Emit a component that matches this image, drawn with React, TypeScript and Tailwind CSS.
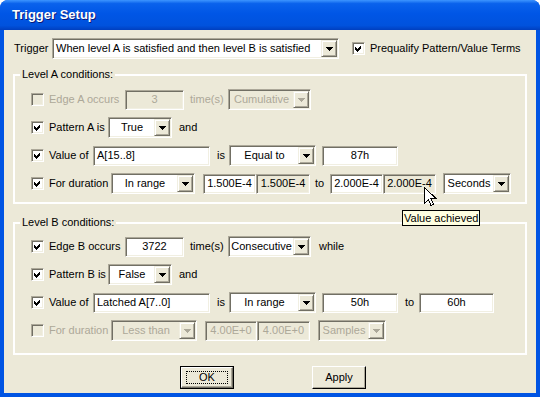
import type { ReactNode } from 'react';

const dis = 'text-[#ACA899]';
const sunken =
  'border border-t-[#ACA899] border-l-[#ACA899] border-r-white border-b-white shadow-[inset_1px_1px_0_#716F64,inset_-1px_-1px_0_#F1EFE2]';

function Check({ on = false, off = false }: { on?: boolean; off?: boolean }) {
  return (
    <span className={`flex h-[13px] w-[13px] shrink-0 ${sunken} ${off ? 'bg-[#ECE9D8]' : 'bg-white'}`}>
      {on && (
        <svg width="11" height="11" viewBox="0 0 11 11" shapeRendering="crispEdges">
          <path d="M2 4 L4 6 L8 2 L8 5 L4 9 L2 7 Z" fill="#000" />
        </svg>
      )}
    </span>
  );
}

function DropBtn({ off = false }: { off?: boolean }) {
  return (
    <span className="flex h-full w-[16px] shrink-0 items-center justify-center border border-t-[#F1EFE2] border-l-[#F1EFE2] border-r-[#716F64] border-b-[#716F64] bg-[#ECE9D8] shadow-[inset_1px_1px_0_#fff,inset_-1px_-1px_0_#ACA899]">
      <svg width="7" height="4" viewBox="0 0 7 4" shapeRendering="crispEdges">
        <path d="M0 0h7v1h-1v1h-1v1h-1v1h-1v-1h-1v-1h-1v-1h-1z" fill={off ? '#ACA899' : '#000'} />
      </svg>
    </span>
  );
}

function Combo({ w, text, off = false, left = false }: { w: string; text: string; off?: boolean; left?: boolean }) {
  return (
    <div className={`flex h-[21px] shrink-0 p-[1px] ${w} ${sunken} ${off ? 'bg-[#ECE9D8]' : 'bg-white'}`}>
      <span
        className={`flex-1 overflow-hidden whitespace-nowrap leading-[17px] ${left ? 'pl-[2px] text-left' : 'text-center'} ${off ? dis : ''}`}
      >
        {text}
      </span>
      <DropBtn off={off} />
    </div>
  );
}

function Field({
  w,
  text,
  off = false,
  gray = false,
  left = false,
}: {
  w: string;
  text: string;
  off?: boolean;
  gray?: boolean;
  left?: boolean;
}) {
  return (
    <div
      className={`flex h-[20px] shrink-0 items-center whitespace-nowrap ${w} ${sunken} ${
        off || gray ? 'bg-[#ECE9D8]' : 'bg-white'
      } ${left ? 'pl-[3px]' : 'justify-center'} ${off ? dis : ''}`}
    >
      {text}
    </div>
  );
}

function Lead({ w, label, on = false, off = false }: { w: string; label: string; on?: boolean; off?: boolean }) {
  return (
    <div className={`flex shrink-0 items-center ${w}`}>
      <Check on={on} off={off} />
      <span className={`ml-[5px] whitespace-nowrap ${off ? dis : ''}`}>{label}</span>
    </div>
  );
}

function Row({ children }: { children: ReactNode }) {
  return <div className="flex h-[21px] items-center">{children}</div>;
}

function Group({ title, children, cls }: { title: string; children: ReactNode; cls: string }) {
  return (
    <fieldset className={`mx-[9px] border-2 border-groove border-white ${cls}`}>
      <legend className="ml-[5px] px-[2px] leading-[13px]">{title}</legend>
      <div className="flex flex-col gap-[7px] pl-[16px]">{children}</div>
    </fieldset>
  );
}

export default function App() {
  return (
    <div className="relative h-[397px] w-[540px] overflow-hidden bg-white text-[11px] text-black [font-family:'Liberation_Sans',Arial,sans-serif]">
      <div className="flex h-full flex-col rounded-t-[8px] bg-[#0054E3]">
        {/* title bar */}
        <div className="flex h-[30px] shrink-0 items-center rounded-t-[8px] bg-[linear-gradient(to_bottom,#3d95ff_0%,#0a62ec_12%,#0056e6_45%,#0052dd_85%,#003fbf_100%)] pl-[12px]">
          <span className="text-[13px] font-bold text-white [text-shadow:1px_1px_0_#0a1a7a]">Trigger Setup</span>
        </div>

        {/* client */}
        <div className="mx-[4px] mb-[4px] flex flex-1 flex-col bg-[#ECE9D8] pt-[8px]">
          <div className="flex h-[21px] items-center pl-[10px]">
            <span className="w-[38px] shrink-0">Trigger</span>
            <Combo w="w-[287px]" text="When level A is satisfied and then level B is satisfied" left />
            <div className="ml-[13px]">
              <Check on />
            </div>
            <span className="ml-[5px]">Prequalify Pattern/Value Terms</span>
          </div>

          <Group title="Level A conditions:" cls="mt-[9px] pt-[8px] pb-[8px]">
            <Row>
              <Lead w="w-[94px]" label="Edge A occurs" off />
              <Field w="w-[59px]" text="3" off />
              <span className={`ml-[6px] w-[38px] shrink-0 ${dis}`}>time(s)</span>
              <Combo w="w-[83px]" text="Cumulative" off />
            </Row>
            <Row>
              <Lead w="w-[77px]" label="Pattern A is" on />
              <Combo w="w-[64px]" text="True" />
              <span className="ml-[7px]">and</span>
            </Row>
            <Row>
              <Lead w="w-[62px]" label="Value of" on />
              <Field w="w-[117px]" text="A[15..8]" left />
              <span className="ml-[7px] w-[12px] shrink-0">is</span>
              <Combo w="w-[87px]" text="Equal to" />
              <Field w="w-[76px] ml-[6px]" text="87h" />
            </Row>
            <Row>
              <Lead w="w-[80px]" label="For duration" on />
              <Combo w="w-[84px]" text="In range" />
              <Field w="w-[53px] ml-[8px]" text="1.500E-4" />
              <Field w="w-[54px]" text="1.500E-4" gray />
              <span className="ml-[5px] w-[15px] shrink-0">to</span>
              <Field w="w-[53px]" text="2.000E-4" />
              <Field w="w-[53px]" text="2.000E-4" gray />
              <Combo w="w-[68px] ml-[7px]" text="Seconds" />
            </Row>
          </Group>

          <Group title="Level B conditions:" cls="mt-[12px] pt-[7px] pb-[12px]">
            <Row>
              <Lead w="w-[94px]" label="Edge B occurs" on />
              <Field w="w-[59px]" text="3722" />
              <span className="ml-[6px] w-[38px] shrink-0">time(s)</span>
              <Combo w="w-[83px]" text="Consecutive" />
              <span className="ml-[8px]">while</span>
            </Row>
            <Row>
              <Lead w="w-[77px]" label="Pattern B is" on />
              <Combo w="w-[64px]" text="False" />
              <span className="ml-[7px]">and</span>
            </Row>
            <Row>
              <Lead w="w-[62px]" label="Value of" on />
              <Field w="w-[117px]" text="Latched A[7..0]" left />
              <span className="ml-[7px] w-[12px] shrink-0">is</span>
              <Combo w="w-[87px]" text="In range" />
              <Field w="w-[76px] ml-[6px]" text="50h" />
              <span className="ml-[7px] w-[14px] shrink-0">to</span>
              <Field w="w-[75px]" text="60h" />
            </Row>
            <Row>
              <Lead w="w-[80px]" label="For duration" off />
              <Combo w="w-[86px]" text="Less than" off />
              <Field w="w-[52px] ml-[8px]" text="4.00E+0" off />
              <Field w="w-[53px]" text="4.00E+0" off />
              <Combo w="w-[68px] ml-[8px]" text="Samples" off />
            </Row>
          </Group>

          <div className="mt-[11px] flex justify-center gap-[78px] pl-[6px]">
            <button className="h-[23px] w-[54px] border border-black bg-[#ECE9D8] p-0">
              <span className="flex h-full w-full items-center justify-center border border-t-white border-l-white border-r-[#716F64] border-b-[#716F64] shadow-[inset_-1px_-1px_0_#ACA899]">
                <span className="border border-dotted border-black px-[12px] leading-[11px]">OK</span>
              </span>
            </button>
            <button className="flex h-[23px] w-[54px] items-center justify-center border border-t-white border-l-white border-r-black border-b-black bg-[#ECE9D8] shadow-[inset_-1px_-1px_0_#ACA899]">
              Apply
            </button>
          </div>
        </div>
      </div>

      {/* tooltip */}
      <div className="absolute left-[402px] top-[210px] flex h-[16px] items-center border border-black bg-[#FFFFE1] px-[1px] leading-[14px]">
        Value achieved
      </div>

      {/* mouse cursor */}
      <svg className="absolute left-[424px] top-[187px]" width="13" height="21" viewBox="0 0 13 21" shapeRendering="crispEdges">
        <path d="M0.5 0.5 V16.5 L4.5 12.5 L7 18.5 L9.5 17.5 L7 11.5 H12 Z" fill="#fff" stroke="#000" strokeWidth="1" />
      </svg>
    </div>
  );
}
